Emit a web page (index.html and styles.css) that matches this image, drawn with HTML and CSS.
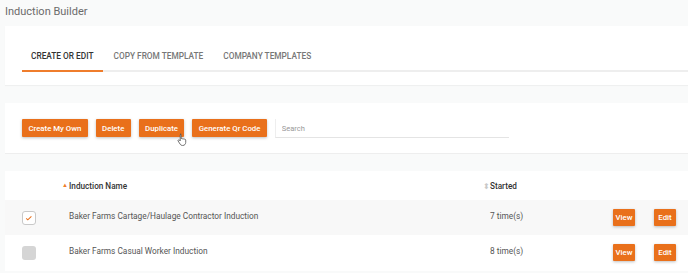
FILE: index.html
```html
<!DOCTYPE html>
<html lang="en">
<head>
    <meta charset="UTF-8">
    <title>Induction Builder</title>
    <link rel="stylesheet" href="styles.css">
</head>
<body>
    <div class="page-title">Induction Builder</div>

    <div class="panel tabs-panel">
        <div class="tabs">
            <a class="tab active">CREATE OR EDIT</a>
            <a class="tab">COPY FROM TEMPLATE</a>
            <a class="tab">COMPANY TEMPLATES</a>
        </div>
    </div>

    <div class="panel toolbar">
        <button class="btn">Create My Own</button>
        <button class="btn">Delete</button>
        <button class="btn">Duplicate</button>
        <button class="btn">Generate Qr Code</button>
        <input class="search" type="text" placeholder="Search">
        <svg class="cursor" viewBox="0 0 12 14" width="11" height="13">
            <path d="M3.5 1.2c.6 0 1 .4 1 1V6l.3-.1c.5-.2 1 0 1.2.4.4-.3 1-.2 1.3.2.4-.2.9-.1 1.2.3.5-.1 1 .3 1 .8v2.6c0 1.8-1.3 3.3-3.1 3.3H5.8c-1 0-1.8-.5-2.3-1.300L1.2 8.6c-.3-.5-.1-1 .4-1.2.4-.2.9 0 1.2.3l.7.9V2.2c0-.6.4-1 1-1z" fill="#fff" stroke="#555" stroke-width=".9"/>
        </svg>
    </div>

    <div class="panel table">
        <div class="row head">
            <div></div>
            <div class="col-title"><span class="sort-up">▲</span>Induction Name</div>
            <div class="col-title"><span class="sort-both">⬍</span>Started</div>
            <div></div>
        </div>
        <div class="row shaded">
            <div><span class="check on">
                <svg viewBox="0 0 10 10" width="8" height="8"><path d="M1.5 5.5l2 1.8 4.5-4.3" fill="none" stroke="#e9701b" stroke-width="1.3"/></svg>
            </span></div>
            <div class="name">Baker Farms Cartage/Haulage Contractor Induction</div>
            <div class="count">7 time(s)</div>
            <div class="actions"><button class="btn small">View</button><button class="btn small">Edit</button></div>
        </div>
        <div class="row">
            <div><span class="check off"></span></div>
            <div class="name">Baker Farms Casual Worker Induction</div>
            <div class="count">8 time(s)</div>
            <div class="actions"><button class="btn small">View</button><button class="btn small">Edit</button></div>
        </div>
    </div>
</body>
</html>
```

FILE: styles.css
```css
body {
    margin: 0;
    background: #f9fafa;
    font-family: 'Roboto', 'Liberation Sans', sans-serif;
    color: #555;
}

.page-title {
    height: 26px;
    padding-left: 5px;
    font-size: 11px;
    line-height: 24px;
    color: #6b6b6b;
}

.panel {
    background: #ffffff;
    margin-left: 5px;
}

.tabs-panel {
    height: 59px;
    padding: 18px 0 0 17px;
    box-sizing: border-box;
    box-shadow: 0 1px 1px rgba(0, 0, 0, 0.04);
}

.tabs {
    display: flex;
    border-bottom: 2px solid #eeeeee;
    height: 26px;
}

.tab {
    padding: 0 9px;
    margin-right: 2px;
    font-size: 8.3px;
    font-weight: 500;
    line-height: 24px;
    color: #777;
    margin-bottom: -2px;
    border-bottom: 2px solid transparent;
}

.tab.active {
    color: #333;
    border-bottom-color: #ef7d2c;
}

.toolbar {
    margin-top: 18px;
    height: 51px;
    box-sizing: border-box;
    padding: 16px 0 0 17px;
    border-bottom: 1px solid #eeeeee;
    display: flex;
    align-items: flex-start;
    gap: 8px;
    position: relative;
}

.btn {
    height: 18px;
    padding: 0 6.4px;
    border: none;
    border-radius: 1px;
    background: #e9701b;
    color: #fff;
    font-family: 'Roboto', 'Liberation Sans', sans-serif;
    font-size: 7.8px;
    font-weight: 500;
    box-shadow: 0 1px 3px rgba(0, 0, 0, 0.25);
}

.search {
    width: 234px;
    height: 19px;
    box-sizing: border-box;
    border: none;
    border-left: 1px solid #eeeeee;
    border-bottom: 1px solid #e4e4e4;
    padding: 0 6px;
    font-family: 'Roboto', 'Liberation Sans', sans-serif;
    font-size: 7.5px;
    outline: none;
}

.search::placeholder {
    color: #999;
}

.cursor {
    position: absolute;
    left: 172px;
    top: 30px;
}

.table {
    margin-top: 17px;
    padding-bottom: 1px;
}

.row {
    display: grid;
    grid-template-columns: 40px 421px 1fr auto;
    align-items: center;
    height: 35px;
    padding: 0 12px 0 17px;
    font-size: 8.3px;
}

.row.head {
    height: 29px;
}

.row.shaded {
    background: #f8f8f8;
}

.col-title {
    color: #333;
    font-weight: 500;
    font-size: 8.2px;
}

.sort-up {
    color: #ef7d2c;
    font-size: 6px;
    display: inline-block;
    width: 7px;
    vertical-align: 2px;
}

.sort-both {
    color: #c8c8c8;
    font-size: 8px;
    display: inline-block;
    width: 7px;
}

.name, .count {
    padding-left: 7px;
    margin-bottom: 4px;
    color: #555;
}

.check {
    display: flex;
    align-items: center;
    justify-content: center;
    width: 14px;
    height: 14px;
    box-sizing: border-box;
    border-radius: 3px;
}

.check.on {
    background: #fff;
    border: 1px solid #c9c9c9;
}

.check.off {
    background: #d5d5d5;
}

.actions {
    display: flex;
    gap: 19px;
}

.btn.small {
    height: 17px;
    width: 22px;
    padding: 0;
}
```
